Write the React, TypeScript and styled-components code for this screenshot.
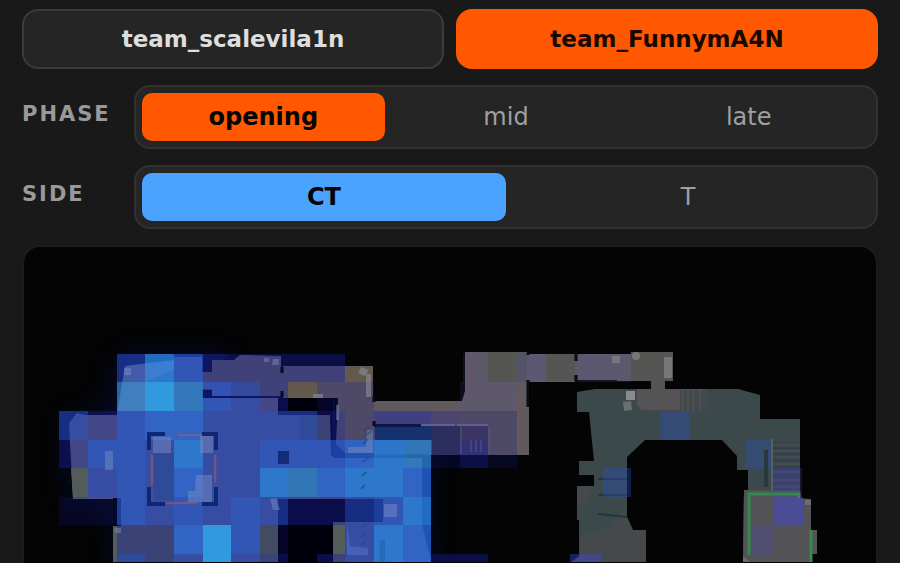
import React, { useState } from "react";
import styled, { createGlobalStyle } from "styled-components";

const GlobalStyle = createGlobalStyle`
  * { box-sizing: border-box; }
  html { background: #191919; }
  body {
    margin: 0;
    overflow: hidden;
    background: #191919;
    font-family: "DejaVu Sans", sans-serif;
  }
`;

const Page = styled.main`
  display: flex;
  flex-direction: column;
  gap: 16px;
  padding: 9px 22px 0;
`;

const TeamRow = styled.div`
  display: grid;
  grid-template-columns: 1fr 1fr;
  gap: 12px;
`;

const TeamButton = styled.button<{ $active: boolean }>`
  height: 60px;
  padding: 0 16px;
  border: 2px solid ${(p) => (p.$active ? "#ff5800" : "#3b3b3b")};
  border-radius: 16px;
  background: ${(p) => (p.$active ? "#ff5800" : "#252525")};
  color: ${(p) => (p.$active ? "#180800" : "#dedede")};
  font: bold 23px "DejaVu Sans", sans-serif;
  cursor: pointer;
`;

const FilterRow = styled.div`
  display: grid;
  grid-template-columns: 112px 1fr;
  align-items: center;
`;

const FilterLabel = styled.span`
  padding-bottom: 6px;
  color: #999;
  font-size: 21px;
  font-weight: bold;
  letter-spacing: 2px;
`;

const SegmentBar = styled.div`
  display: flex;
  height: 64px;
  padding: 6px;
  border: 2px solid #313131;
  border-radius: 16px;
  background: #252525;
`;

const Segment = styled.button<{ $active: boolean; $accent: string }>`
  flex: 1 1 0;
  padding: 0;
  border: 0;
  border-radius: 10px;
  background: ${(p) => (p.$active ? p.$accent : "transparent")};
  color: ${(p) => (p.$active ? "#050505" : "#a0a0a0")};
  font: ${(p) => (p.$active ? "bold" : "normal")} 24px "DejaVu Sans", sans-serif;
  cursor: pointer;
`;

const MapPanel = styled.section`
  overflow: hidden;
  border: 2px solid #1c1c1c;
  border-bottom: 0;
  border-radius: 18px 18px 0 0;
  background: #040404;
`;

const MapDrawing = styled.svg`
  display: block;
  width: 100%;
  height: auto;
`;

const COLUMN_EDGES = [59, 88, 117, 145, 174, 203, 231, 260, 288, 317, 345, 374, 403, 431, 460, 488, 517];
const ROW_EDGES = [354, 382, 411, 440, 468, 497, 525, 554, 582];

const LEVELS: Record<string, string> = {
  a: "rgba(18,22,130,.24)",
  b: "rgba(24,32,160,.42)",
  c: "rgba(32,66,186,.68)",
  d: "rgba(36,82,202,.76)",
  e: "rgba(38,100,214,.82)",
  f: "rgba(38,122,218,.88)",
  g: "rgba(44,158,232,.92)",
  t: "rgba(42,124,204,.82)",
};

const HEAT_ROWS = [
  "..cfdbbbbb......",
  "..tgtdcb.aa.....",
  "cbdeeccccbabbaaa",
  "bddcfccdddeftaba",
  ".cdceccfteffe...",
  "aadcdcdcbbcdf...",
  "..bbegda..cfe...",
  "..cbcgcb.bcfebb.",
];

const SPOTS: Array<[number, number, number, number, string]> = [
  [374, 411, 86, 15, "rgba(60,50,190,.1)"],
  [463, 354, 22, 28, "rgba(80,80,180,.16)"],
  [517, 354, 29, 28, "rgba(80,80,210,.18)"],
  [577, 354, 55, 28, "rgba(80,80,180,.2)"],
  [460, 382, 57, 29, "rgba(80,80,190,.14)"],
  [660, 411, 29, 29, "rgba(40,80,200,.35)"],
  [603, 468, 28, 29, "rgba(40,80,200,.35)"],
  [745, 440, 27, 29, "rgba(40,80,200,.3)"],
  [772, 468, 30, 29, "rgba(70,60,210,.28)"],
  [774, 497, 29, 28, "rgba(65,70,220,.48)"],
  [751, 525, 23, 30, "rgba(75,65,180,.26)"],
  [570, 554, 32, 9, "rgba(60,70,220,.42)"],
];

const Floor = () => (
  <g>
    <path fill="#605a5e" d="M202 372H212V360H234L240 355H247L281 356V373H283V366H373V400H375V401H462L465 391V352H527V354H575V355H577V354H631V352H673V381H665V391H651V381H617V380H577V377H575V382H528V407H529V455H374V453H345L336 444L338 398H283V391H281V396H212V389H202Z" />
    <path fill="#555553" d="M488 352H527V382H488ZM546 354H575V381H546ZM631 352H673V381H631Z" />
    <path fill="#646575" d="M125 366L174 360V357H202V397H278V415H330L333 458H422V524L431 560V563H113V528H121V499H73L69 423L77 413L85 415H117Z" />
    <path fill="#525c58" d="M71 468H88V498H73ZM151 453H174V500H151ZM300 415H330V440H300ZM113 525H174V563H113ZM260 525H278V563H260ZM333 522H346V563H333ZM288 468H317V497H288Z" />
    <path fill="#020208" d="M278 499H383V522H333V563H278ZM113 498H121V526H113Z" />
    <path fill="#020208" d="M278 398H337L333 456H331L330 415H278Z" />
    <path fill="none" stroke="#030825" strokeWidth="3" d="M334 400V448L342 456H431" />
    <path fill="#3b494c" d="M577 392L595 389H738L760 395V419H800V498L811 499V563H743L744 490H748V470H737V456L722 440H645L627 457V524L633 530H646V563H570L579 556V520H577V486H594V475H579V461H594L589 412H577Z" />
    <path fill="#454a4c" d="M577 487H592L588 503H577ZM580 535L612 527L624 510L633 530H646V563H580Z" />
    <path fill="#525354" d="M744 490H800V499H811V530H817V554H811V563H743Z" />
    <path fill="#545354" d="M651 380H665V389H706V411H641L636 406V389H651Z" />
    <path fill="none" stroke="#47474a" strokeWidth="2" d="M636 390V405L641 411H707" />
    <path fill="#424a4d" d="M680 390H708V411H680Z" />
    <path stroke="#4f5050" strokeWidth="2" d="M683 390V411M688 390V411M693 390V411M700 390V411" />
    <path fill="#31434a" d="M772 442H800V490H772Z" />
    <path stroke="#464c50" strokeWidth="3" d="M772 445H800M772 451H800M772 457H800M772 464H800M772 472H800M772 480H800M772 487H800" />
    <path stroke="#26363b" strokeWidth="2" d="M598 479H627M598 495H627M598 514L627 517" />
    <path fill="#16404c" d="M375 425H432V440H375Z" />
    <path fill="#353952" d="M432 426H460V455H432Z" />
    <path fill="#464058" d="M460 426H488V455H460Z" />
    <path fill="#665738" d="M346 367H373V382H346ZM288 382H317V398H288Z" opacity=".45" />
    <path fill="none" stroke="#a06048" strokeWidth="3" d="M152 436H216V504H152Z" />
  </g>
);

const Details = () => (
  <g>
    <path fill="none" stroke="#9a6266" strokeWidth="2" opacity=".5" d="M152 455V485M215 455V482M166 503H197M178 435H203" />
    <path fill="#8490c0" opacity=".45" d="M124 368H131V375H124ZM153 437H171V453H153ZM200 436H213V453H200ZM196 475H212V502H188V491H195ZM105 451H113V470H105ZM115 528H121V533H115ZM270 499L276 498L280 510H273ZM384 504H397V517H384ZM367 430H373V453H348V447H366ZM336 405H339V420H336Z" />
    <path fill="#8b8994" opacity=".65" d="M361 367L369 370L365 376L358 373ZM366 374H371V397H366ZM313 394H323V398H313Z" />
    <path fill="#8085ad" opacity=".5" d="M273 359L279 359V365H272ZM264 358H269V362H264Z" />
    <path fill="#809bd2" opacity=".18" d="M125 366L174 360V370L145 382L123 378ZM117 411L123 378H145V411Z" />
    <path fill="none" stroke="#102575" strokeWidth="4" d="M149 450V434H165M202 434H216V450M149 487V504H165M202 504H216V487" />
    <path fill="#12297c" d="M278 451H289V464H278Z" />
    <path fill="#0b175f" d="M203 354H229L224 360H212V372H203ZM203 390H212V396H281V398H203Z" />
    <path fill="none" stroke="#24507c" strokeWidth="2" d="M363 431L370 426M363 437L372 431M363 444L368 439M362 462L369 458M362 476L366 472M361 489L365 485M361 528L366 524M361 537L366 533M361 545L366 541" opacity=".7" />
    <path fill="#101644" d="M374 424H421V427H374Z" />
    <path stroke="#655e91" strokeWidth="2" d="M421 425H455M457 425H488" />
    <path fill="none" stroke="#5e597e" strokeWidth="1" d="M461 427V454M471 440V452M476 440V452M481 440V452M489 427V454" />
    <path fill="#5a74cc" opacity=".5" d="M347 525L350 546L368 548V555H347Z" />
    <path fill="#1763a7" opacity=".5" d="M380 540H385V563H379Z" />
    <path stroke="#080812" strokeWidth="3" d="M282 367V373M282 391V397M374 396V402M374 421V426M528 353V355M528 380V407M576 353V361M576 375V381" />
    <path fill="#777679" d="M612 356H620V363H612ZM664 357H672V378H664Z" />
    <path fill="#898c8d" d="M626 391H635V400H626Z" />
    <path fill="#66706e" d="M623 402L631 401L632 410L624 411Z" />
    <circle cx="636" cy="356" r="4" fill="#777" />
    <path fill="none" stroke="#765150" strokeWidth="2" d="M469 357L470 377L466 391M518 390V453" opacity=".5" />
    <path fill="none" stroke="#33894d" strokeWidth="3" d="M749 555V494H799V498M811 530V563" />
    <path fill="#777777" d="M805 500H811V505H805ZM743 556L750 562H743Z" opacity=".7" />
    <path fill="#29383b" d="M764 450H768V487H764Z" />
    <path stroke="#51635c" strokeWidth="2" d="M772 439V490" />
  </g>
);

const HeatMap = () => (
  <MapDrawing viewBox="24 247 852 316" role="img" aria-label="Opening position heat map">
    <defs>
      <filter id="glow" x="-30%" y="-30%" width="160%" height="160%">
        <feGaussianBlur stdDeviation="16" />
      </filter>
      <filter id="soften">
        <feGaussianBlur stdDeviation=".5" />
      </filter>
    </defs>
    <path
      d="M117 358H231V411H330V440H427V563H117V497H70V415H117Z"
      fill="#0620ac"
      opacity=".26"
      filter="url(#glow)"
    />
    <g filter="url(#soften)"><Floor /></g>
    <g shapeRendering="crispEdges">
      {HEAT_ROWS.flatMap((row, y) =>
        row.split("").map((level, x) =>
          level === "." ? null : (
            <rect
              key={`${x}-${y}`}
              x={COLUMN_EDGES[x]}
              y={ROW_EDGES[y]}
              width={COLUMN_EDGES[x + 1] - COLUMN_EDGES[x]}
              height={ROW_EDGES[y + 1] - ROW_EDGES[y]}
              fill={LEVELS[level]}
            />
          ),
        ),
      )}
      {SPOTS.map(([x, y, width, height, fill]) => (
        <rect key={`${x}-${y}`} x={x} y={y} width={width} height={height} fill={fill} />
      ))}
    </g>
    <g filter="url(#soften)"><Details /></g>
    <path fill="#030303" d="M24 562H876V563H24Z" />
  </MapDrawing>
);

type FilterProps = {
  label: string;
  options: string[];
  value: string;
  accent: string;
  onChange: (value: string) => void;
};

const Filter = ({ label, options, value, accent, onChange }: FilterProps) => {
  const id = `filter-${label.toLowerCase()}`;
  return (
    <FilterRow>
      <FilterLabel id={id}>{label}</FilterLabel>
      <SegmentBar role="group" aria-labelledby={id}>
        {options.map((option) => (
          <Segment
            key={option}
            type="button"
            $active={option === value}
            $accent={accent}
            aria-pressed={option === value}
            onClick={() => onChange(option)}
          >
            {option}
          </Segment>
        ))}
      </SegmentBar>
    </FilterRow>
  );
};

export default function App() {
  const [team, setTeam] = useState("team_FunnymA4N");
  const [phase, setPhase] = useState("opening");
  const [side, setSide] = useState("CT");
  return (
    <>
      <GlobalStyle />
      <Page>
        <TeamRow>
          {["team_scalevila1n", "team_FunnymA4N"].map((name) => (
            <TeamButton
              key={name}
              type="button"
              $active={name === team}
              aria-pressed={name === team}
              onClick={() => setTeam(name)}
            >
              {name}
            </TeamButton>
          ))}
        </TeamRow>
        <Filter label="PHASE" options={["opening", "mid", "late"]} value={phase} accent="#ff5800" onChange={setPhase} />
        <Filter label="SIDE" options={["CT", "T"]} value={side} accent="#4aa3ff" onChange={setSide} />
        <MapPanel>
          <HeatMap />
        </MapPanel>
      </Page>
    </>
  );
}
